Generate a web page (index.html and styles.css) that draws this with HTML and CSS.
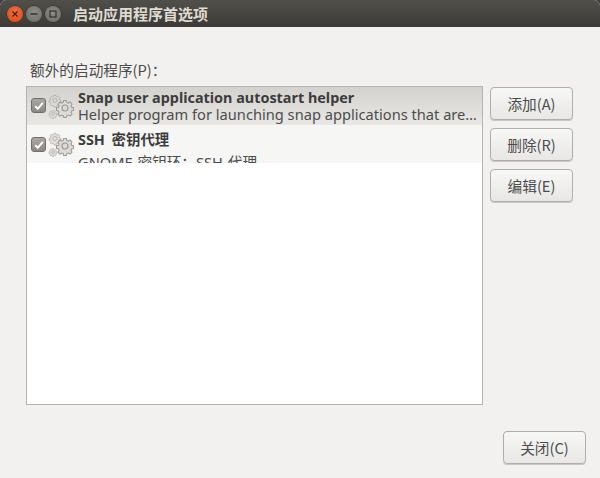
FILE: index.html
```html
<!DOCTYPE html>
<html lang="zh">
<head>
<meta charset="utf-8">
<title>启动应用程序首选项</title>
<link rel="stylesheet" href="styles.css">
</head>
<body>
<svg width="0" height="0" class="defs" aria-hidden="true">
  <defs>
    <g id="gear">
      <path d="M-1.2 -6.5h2.4l.4 1.7 1.3.5 1.5-.9 1.7 1.7-.9 1.5.5 1.3 1.7.4v2.4l-1.7.4-.5 1.3.9 1.5-1.7 1.7-1.5-.9-1.3.5-.4 1.7h-2.4l-.4-1.7-1.3-.5-1.5.9-1.7-1.7.9-1.5-.5-1.3-1.7-.4v-2.4l1.7-.4.5-1.3-.9-1.5 1.7-1.7 1.5.9 1.3-.5z" fill="#dcdbd8" stroke="#9b9a96" stroke-width=".9"/>
      <circle r="2.6" fill="none" stroke="#9b9a96" stroke-width="1"/>
    </g>
    <symbol id="gears" viewBox="0 0 28 28">
      <use href="#gear" transform="translate(8 9.5) scale(.8)" opacity=".8"/>
      <use href="#gear" transform="translate(18 17) scale(1.15)"/>
      <use href="#gear" transform="translate(6 23) scale(.55)" opacity=".9"/>
    </symbol>
  </defs>
</svg>
<div class="window">
  <header class="titlebar">
    <div class="controls">
      <span class="ctl ctl-close"><svg viewBox="0 0 8 8" class="glyph"><path d="M1.5 1.5l5 5M6.5 1.5l-5 5" stroke="#4a1d08" stroke-width="1.2"/></svg></span>
      <span class="ctl ctl-min"><svg viewBox="0 0 8 8" class="glyph"><path d="M0.5 4h7" stroke="#33322e" stroke-width="1.3"/></svg></span>
      <span class="ctl ctl-max"><svg viewBox="0 0 8 8" class="glyph"><rect x="1" y="1" width="6" height="6" fill="none" stroke="#33322e" stroke-width="1.2"/></svg></span>
    </div>
    <h1 class="title">启动应用程序首选项</h1>
  </header>
  <main class="content">
    <div class="list-label">额外的启动程序(P)：</div>
    <div class="columns">
      <div class="list">
        <div class="row row-selected">
          <span class="check"><svg viewBox="0 0 12 12" class="tick"><path d="M2.2 6.2l2.6 2.6 5-6" fill="none" stroke="#fff" stroke-width="2"/></svg></span>
          <svg class="gears"><use href="#gears"/></svg>
          <div class="row-text">
            <div class="row-name">Snap user application autostart helper</div>
            <div class="row-desc">Helper program for launching snap applications that are…</div>
          </div>
        </div>
        <div class="row row-alt">
          <span class="check"><svg viewBox="0 0 12 12" class="tick"><path d="M2.2 6.2l2.6 2.6 5-6" fill="none" stroke="#fff" stroke-width="2"/></svg></span>
          <svg class="gears"><use href="#gears"/></svg>
          <div class="row-text">
            <div class="row-name">SSH 密钥代理</div>
            <div class="row-desc">GNOME 密钥环：SSH 代理</div>
          </div>
        </div>
      </div>
      <div class="side-buttons">
        <button class="btn">添加(A)</button>
        <button class="btn">删除(R)</button>
        <button class="btn">编辑(E)</button>
      </div>
    </div>
    <div class="footer">
      <button class="btn">关闭(C)</button>
    </div>
  </main>
</div>
</body>
</html>
```
FILE: styles.css
```css
html, body {
  margin: 0;
  padding: 0;
  width: 600px;
  height: 478px;
  overflow: hidden;
  background: #3c3b37;
}
.defs {
  display: block;
  height: 0;
}
.window {
  width: 600px;
  height: 478px;
  display: flex;
  flex-direction: column;
  font-family: "Noto Sans", "Noto Sans CJK SC", sans-serif;
  font-size: 14.67px;
  color: #3c3c3c;
  background: #f2f1f0;
  border-radius: 6px 6px 0 0;
  overflow: hidden;
}
.titlebar {
  height: 27px;
  flex: none;
  display: flex;
  align-items: center;
  padding-left: 7px;
  background: linear-gradient(#504f4a, #3c3b37);
}
.controls {
  display: flex;
  gap: 3px;
}
.ctl {
  width: 16px;
  height: 16px;
  border-radius: 50%;
  display: flex;
  align-items: center;
  justify-content: center;
  background: radial-gradient(circle at 50% 40%, #8e8d87, #6a6963);
  box-shadow: 0 0 0 .5px #2e2d2a;
}
.ctl-close {
  background: radial-gradient(circle at 50% 40%, #f0703e, #d8481a);
}
.glyph {
  width: 8px;
  height: 8px;
}
.title {
  margin: 0 0 0 12px;
  font-size: 15px;
  font-weight: 700;
  color: #dfdbd2;
  font-family: "Noto Sans CJK SC", sans-serif;
}
.content {
  flex: 1;
  display: flex;
  flex-direction: column;
  padding: 33px 14px 14px 26px;
}
.list-label {
  height: 26px;
  padding-left: 4px;
  line-height: 20px;
  font-size: 14.67px;
  color: #4c4c4c;
  font-family: "Noto Sans CJK SC", sans-serif;
}
.columns {
  display: flex;
  gap: 7px;
  height: 319px;
}
.list {
  width: 457px;
  height: 319px;
  box-sizing: border-box;
  border: 1px solid #b6b3ae;
  background: #fff;
  flex: none;
}
.row {
  height: 38px;
  display: flex;
  align-items: flex-start;
  overflow: hidden;
  box-sizing: border-box;
}
.row-selected {
  background: linear-gradient(#d4d2ce, #e9e8e5);
}
.row-alt {
  background: #f6f6f5;
}
.check {
  width: 15px;
  height: 15px;
  margin: 11px 0 0 4px;
  flex: none;
  box-sizing: border-box;
  border: 1px solid #6f6e6a;
  border-radius: 3px;
  background: linear-gradient(#a9a8a4, #8a8985);
  display: flex;
  align-items: center;
  justify-content: center;
}
.row-alt .check {
  margin-top: 12px;
}
.tick {
  width: 12px;
  height: 12px;
}
.gears {
  width: 28px;
  height: 28px;
  margin: 4px 0 0 1px;
  flex: none;
}
.row-text {
  margin-left: 3px;
  min-width: 0;
  padding-top: 2px;
}
.row-name {
  font-weight: 700;
  font-size: 14.4px;
  line-height: 17px;
  color: #3c3c3c;
  white-space: nowrap;
}
.row-desc {
  font-size: 14.65px;
  line-height: 17px;
  color: #4c4c4c;
  white-space: nowrap;
}
.row-alt .row-text {
  padding-top: 4px;
}
.row-alt .row-name {
  line-height: 21px;
  word-spacing: 3px;
}
.row-alt .row-desc {
  line-height: 25px;
  word-spacing: 1px;
}
.side-buttons {
  display: flex;
  flex-direction: column;
  gap: 8px;
  padding-top: 1px;
}
.btn {
  width: 83px;
  height: 33px;
  padding: 0;
  box-sizing: border-box;
  border: 1px solid #b0aeaa;
  border-radius: 4px;
  background: linear-gradient(#f7f7f6, #e8e7e5);
  box-shadow: 0 1px 0 #c9c7c3;
  font-family: "Noto Sans CJK SC", sans-serif;
  font-size: 14.67px;
  color: #4c4c4c;
}
.footer {
  display: flex;
  justify-content: flex-end;
  margin-top: 26px;
}
```
